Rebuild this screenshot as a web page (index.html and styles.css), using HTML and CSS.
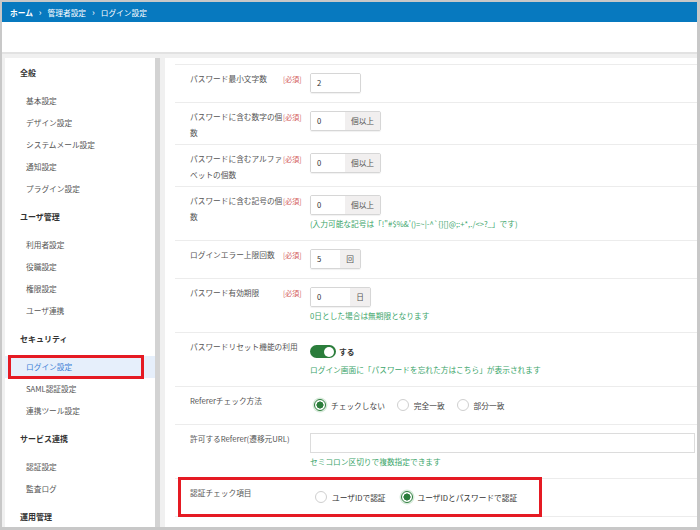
FILE: index.html
```html
<!DOCTYPE html>
<html lang="ja">
<head>
  <meta charset="UTF-8">
  <title>ログイン設定</title>
  <link rel="stylesheet" href="styles.css">
</head>
<body>
  <div class="frame">
    <div class="topbar">
      <span class="crumb home">ホーム</span>
      <span class="sep">›</span>
      <span class="crumb">管理者設定</span>
      <span class="sep">›</span>
      <span class="crumb">ログイン設定</span>
    </div>
    <div class="header"></div>

    <div class="body">
      <aside class="sidebar">
        <div class="menu">
          <div class="menu-head">全般</div>
          <div class="menu-item">基本設定</div>
          <div class="menu-item">デザイン設定</div>
          <div class="menu-item">システムメール設定</div>
          <div class="menu-item">通知設定</div>
          <div class="menu-item">プラグイン設定</div>

          <div class="menu-head">ユーザ管理</div>
          <div class="menu-item">利用者設定</div>
          <div class="menu-item">役職設定</div>
          <div class="menu-item">権限設定</div>
          <div class="menu-item">ユーザ連携</div>

          <div class="menu-head">セキュリティ</div>
          <div class="menu-item active">ログイン設定</div>
          <div class="menu-item">SAML認証設定</div>
          <div class="menu-item">連携ツール設定</div>

          <div class="menu-head">サービス連携</div>
          <div class="menu-item">認証設定</div>
          <div class="menu-item">監査ログ</div>

          <div class="menu-head">運用管理</div>
        </div>
        <div class="scroll"></div>
      </aside>

      <main class="main">
        <div class="row">
          <div class="row-head"><div class="label">パスワード最小文字数</div><span class="req">[必須]</span></div>
          <div class="control">
            <div class="field">
              <div class="input"><span class="val val-single">2</span></div>
            </div>
          </div>
        </div>

        <div class="row">
          <div class="row-head"><div class="label">パスワードに含む数字の個数</div><span class="req">[必須]</span></div>
          <div class="control">
            <div class="field">
              <div class="input"><span class="val val-md">0</span><span class="addon addon-wide">個以上</span></div>
            </div>
          </div>
        </div>

        <div class="row">
          <div class="row-head"><div class="label">パスワードに含むアルファベットの個数</div><span class="req">[必須]</span></div>
          <div class="control">
            <div class="field">
              <div class="input"><span class="val val-md">0</span><span class="addon addon-wide">個以上</span></div>
            </div>
          </div>
        </div>

        <div class="row">
          <div class="row-head"><div class="label">パスワードに含む記号の個数</div><span class="req">[必須]</span></div>
          <div class="control">
            <div class="field">
              <div class="input"><span class="val val-md">0</span><span class="addon addon-wide">個以上</span></div>
            </div>
            <div class="help">(入力可能な記号は「!"#$%&amp;'()=~|-^`{}[]@;:+*,./&lt;&gt;?_」です)</div>
          </div>
        </div>

        <div class="row">
          <div class="row-head"><div class="label">ログインエラー上限回数</div><span class="req">[必須]</span></div>
          <div class="control">
            <div class="field">
              <div class="input"><span class="val val-sm">5</span><span class="addon">回</span></div>
            </div>
          </div>
        </div>

        <div class="row">
          <div class="row-head"><div class="label">パスワード有効期限</div><span class="req">[必須]</span></div>
          <div class="control">
            <div class="field">
              <div class="input"><span class="val val-lg">0</span><span class="addon">日</span></div>
            </div>
            <div class="help">0日とした場合は無期限となります</div>
          </div>
        </div>

        <div class="row">
          <div class="row-head"><div class="label">パスワードリセット機能の利用</div></div>
          <div class="control">
            <div class="field">
              <span class="toggle"></span><span class="toggle-text">する</span>
            </div>
            <div class="help">ログイン画面に「パスワードを忘れた方はこちら」が表示されます</div>
          </div>
        </div>

        <div class="row">
          <div class="row-head"><div class="label">Refererチェック方法</div></div>
          <div class="control">
            <div class="field radios">
              <span class="radio on"></span><span class="radio-text">チェックしない</span>
              <span class="radio"></span><span class="radio-text">完全一致</span>
              <span class="radio"></span><span class="radio-text">部分一致</span>
            </div>
          </div>
        </div>

        <div class="row">
          <div class="row-head"><div class="label">許可するReferer(遷移元URL)</div></div>
          <div class="control">
            <div class="field"><div class="textbox"></div></div>
            <div class="help">セミコロン区切りで複数指定できます</div>
          </div>
        </div>

        <div class="row marked">
          <div class="row-head"><div class="label">認証チェック項目</div></div>
          <div class="control">
            <div class="field radios wide">
              <span class="radio"></span><span class="radio-text">ユーザIDで認証</span>
              <span class="radio on"></span><span class="radio-text">ユーザIDとパスワードで認証</span>
            </div>
          </div>
        </div>
      </main>
    </div>
  </div>
</body>
</html>
```

FILE: styles.css
```css
html, body {
  margin: 0;
  padding: 0;
}

body {
  font-family: 'Noto Sans CJK JP', 'Noto Sans', sans-serif;
  font-size: 7.7px;
  color: #555;
  background: #fff;
}

.frame {
  width: 700px;
  height: 530px;
  box-sizing: border-box;
  border: 2px solid #c8c8c8;
  border-right-width: 3px;
  border-bottom-width: 3px;
  display: flex;
  flex-direction: column;
  overflow: hidden;
}

.topbar {
  height: 20px;
  flex: 0 0 20px;
  background: #0779bf;
  color: #fff;
  display: flex;
  align-items: center;
  padding-left: 8px;
}

.crumb.home {
  font-weight: bold;
}

.sep {
  margin: 0 6px 0 6px;
  font-size: 9px;
}

.header {
  height: 30px;
  flex: 0 0 30px;
  background: #fff;
  border-bottom: 2px solid #e2e2e2;
}

.body {
  flex: 1;
  display: flex;
  align-items: stretch;
  background: #f0f0f0;
  padding-left: 3px;
  min-height: 0;
}

/* sidebar */
.sidebar {
  display: flex;
  margin-top: 4px;
}

.menu {
  width: 150px;
  background: #fff;
  padding-top: 4px;
  box-sizing: border-box;
}

.scroll {
  width: 5px;
  background: #d3d3d3;
}

.menu-head {
  line-height: 22px;
  padding-left: 15px;
  margin: 6px 0 6px;
  font-size: 8px;
  font-weight: bold;
  color: #333;
}

.menu-head:first-child {
  margin-top: 0;
}

.menu-item {
  line-height: 22px;
  padding-left: 21px;
  color: #555;
  position: relative;
}

.menu-item.active {
  background: #e6effb;
  color: #3d7fd6;
}

.menu-item.active::after {
  content: "";
  position: absolute;
  left: 3px;
  top: -1px;
  width: 136px;
  height: 24px;
  box-sizing: border-box;
  border: 3px solid #e51a23;
}

/* main form */
.main {
  flex: 1;
  background: #fff;
  margin: 4px 0 0 5px;
  padding: 6px 0 0 10px;
}

.row {
  display: flex;
  border-top: 1px solid #ececec;
  padding: 8px 0 9px;
  position: relative;
}

.row:last-child {
  border-bottom: 1px solid #ececec;
}

.row-head {
  flex: 0 0 135px;
  box-sizing: border-box;
  padding-left: 15px;
  display: flex;
  align-items: flex-start;
  margin: -2px 0 -6px;
}

.label {
  flex: 1;
  line-height: 16px;
  color: #555;
}

.req {
  flex: 0 0 27px;
  font-size: 7px;
  line-height: 16px;
  color: #d35b5b;
}

.control {
  flex: 1;
  padding-right: 2px;
}

.field {
  height: 20px;
  display: flex;
  align-items: center;
}

.help {
  margin-top: 2px;
  line-height: 14px;
  color: #3ba56a;
}

.input {
  display: flex;
  height: 20px;
  box-sizing: border-box;
  border: 1px solid #d6d6d6;
  border-radius: 2px;
  box-shadow: 0 1px 1px rgba(0, 0, 0, 0.06);
  overflow: hidden;
}

.val {
  padding-left: 6px;
  line-height: 18px;
  color: #333;
  box-sizing: border-box;
  background: #fff;
}

.val-single { width: 49px; }
.val-sm { width: 29px; }
.val-md { width: 34px; }
.val-lg { width: 39px; }

.addon {
  width: 20px;
  background: #f1efef;
  line-height: 18px;
  text-align: center;
  color: #555;
}

.addon.addon-wide {
  width: 35px;
}

.toggle {
  width: 26px;
  height: 13px;
  border-radius: 7px;
  background: #2b7d3b;
  position: relative;
  margin-top: 1px;
}

.toggle::after {
  content: "";
  position: absolute;
  right: 2px;
  top: 1.5px;
  width: 10px;
  height: 10px;
  border-radius: 50%;
  background: #fff;
}

.toggle-text {
  margin-left: 3px;
  color: #333;
  font-weight: bold;
}

.radios {
  padding-left: 4px;
}

.radios.wide {
  padding-left: 5px;
}

.radio {
  width: 12px;
  height: 12px;
  box-sizing: border-box;
  border-radius: 50%;
  border: 1px solid #cfcfcf;
  background: #fff;
  flex: 0 0 12px;
}

.radio.on {
  border-color: #2b7d3b;
  background: radial-gradient(circle, #2b7d3b 0 3.3px, #fff 3.8px);
  box-shadow: 0 0 0 1.5px #d9ebdc;
}

.radio-text {
  margin: 0 12px 0 5px;
  color: #444;
}

.radios.wide .radio-text {
  margin-right: 15px;
  color: #333;
}

.textbox {
  flex: 1;
  height: 20px;
  box-sizing: border-box;
  border: 1px solid #dcdcdc;
  background: #fff;
}

.row.marked::after {
  content: "";
  position: absolute;
  left: 3px;
  top: -2px;
  width: 364px;
  height: 40px;
  box-sizing: border-box;
  border: 3px solid #e51a23;
}
```
